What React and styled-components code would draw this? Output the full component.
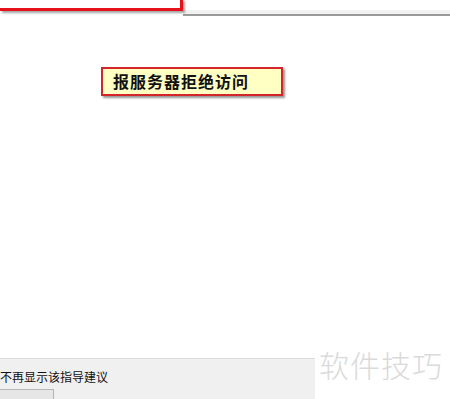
import React from "react";
import styled, { createGlobalStyle } from "styled-components";

const GlobalStyle = createGlobalStyle`
  html, body {
    margin: 0;
    padding: 0;
    background: #ffffff;
  }
  body {
    font-family: "Noto Sans CJK SC", "Noto Sans", sans-serif;
  }
`;

export default function App() {
  return (
    <Page>
      <GlobalStyle />
      <TopStrip>
        <RedFrame />
        <ToolBar />
      </TopStrip>

      <Canvas>
        <Callout>报服务器拒绝访问</Callout>
      </Canvas>

      <Footer>
        <HintPanel>
          <HintText>不再显示该指导建议</HintText>
          <PanelButton />
        </HintPanel>
      </Footer>

      <Watermark>软件技巧</Watermark>
    </Page>
  );
}

const Page = styled.div`
  position: relative;
  width: 450px;
  height: 399px;
  overflow: hidden;
  display: flex;
  flex-direction: column;
  background: #ffffff;
`;

const TopStrip = styled.div`
  display: flex;
  height: 16px;
  flex-shrink: 0;
`;

const RedFrame = styled.div`
  width: 180px;
  height: 9px;
  margin-top: -1px;
  border-right: 3px solid #e3121b;
  border-bottom: 3px solid #e3121b;
  box-shadow: 2px 2px 2px rgba(90, 90, 90, 0.55);
  background: #ffffff;
  position: relative;
  z-index: 1;
`;

const ToolBar = styled.div`
  flex: 1;
  margin-top: 10px;
  background: #f2f2f2;
  border-bottom: 2px solid #9a9a9a;
`;

const Canvas = styled.div`
  flex: 1;
  padding: 51px 0 0 101px;
`;

const Callout = styled.div`
  width: 168px;
  height: 25px;
  padding-left: 10px;
  border: 2px solid #d4262a;
  background: #ffffc4;
  box-shadow: 2px 2px 2px rgba(80, 80, 80, 0.6);
  font-size: 16px;
  font-weight: 700;
  line-height: 25px;
  color: #111111;
  letter-spacing: 1px;
`;

const Footer = styled.div`
  height: 41px;
  flex-shrink: 0;
  display: flex;
`;

const HintPanel = styled.div`
  width: 315px;
  background: #f0f0f0;
  border-top: 1px solid #dcdcdc;
  display: flex;
  flex-direction: column;
  padding-top: 10px;
`;

const HintText = styled.div`
  font-size: 12px;
  line-height: 16px;
  color: #111111;
  height: 24px;
`;

const PanelButton = styled.div`
  width: 53px;
  height: 10px;
  border-top: 1px solid #b5b5b5;
  border-right: 1px solid #b5b5b5;
  background: #e6e6e6;
`;

const Watermark = styled.div`
  position: absolute;
  left: 319px;
  top: 345px;
  font-size: 30px;
  font-weight: 300;
  line-height: 38px;
  color: #dadada;
  letter-spacing: 1px;
`;
